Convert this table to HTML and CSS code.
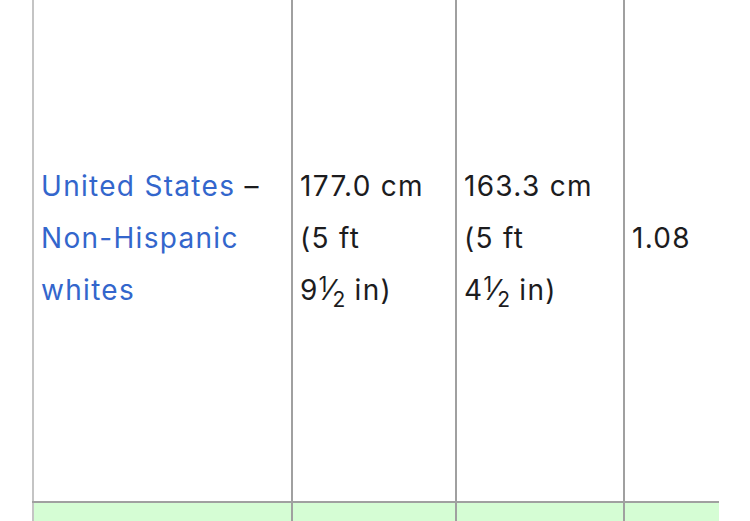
FILE: index.html
```html
<!DOCTYPE html>
<html>
<head>
<meta charset="utf-8">
<link rel="stylesheet" href="styles.css">
</head>
<body>
<div class="wrap">
<table class="heights">
<colgroup>
<col class="c-name">
<col class="c-male">
<col class="c-female">
<col class="c-ratio">
</colgroup>
<tbody>
<tr class="row-main">
<td class="cell cell-first"><a class="link" href="#">United States</a> – <a class="link" href="#">Non-Hispanic whites</a></td>
<td class="cell">177.0&nbsp;cm (5&nbsp;ft <span class="nw">9<span class="frac"><sup>1</sup>⁄<sub>2</sub></span>&nbsp;in)</span></td>
<td class="cell">163.3&nbsp;cm (5&nbsp;ft <span class="nw">4<span class="frac"><sup>1</sup>⁄<sub>2</sub></span>&nbsp;in)</span></td>
<td class="cell cell-last">1.08</td>
</tr>
<tr class="row-green">
<td class="cell cell-first"></td>
<td class="cell"></td>
<td class="cell"></td>
<td class="cell cell-last"></td>
</tr>
</tbody>
</table>
</div>
</body>
</html>
```
FILE: styles.css
```css
html, body {
  margin: 0;
  padding: 0;
  background: #ffffff;
}
body {
  font-family: "Inter", "Liberation Sans", sans-serif;
  font-size: 28px;
  letter-spacing: 1.3px;
  line-height: 52px;
  color: #1c1c1e;
  overflow: hidden;
  height: 521px;
}
.wrap {
  padding-left: 32px;
  margin-top: -26px;
}
.heights {
  border-collapse: collapse;
  table-layout: fixed;
  width: 686px;
}
.c-name { width: 259px; }
.c-male { width: 164px; }
.c-female { width: 168px; }
.c-ratio { width: 95px; }
.cell {
  border: 2px solid #a0a0a0;
  padding: 0 6px 0 7px;
  vertical-align: middle;
  text-align: left;
}
.cell-first { border-left-color: #c4c4c4; }
.cell-last { border-right: none; }
.row-main { height: 528px; }
.row-main .cell { border-top: none; }
.row-green { height: 40px; }
.row-green .cell { background: #d5fdd4; }
.row-green .cell-first { border-left-color: #c4c4c4; }
.link {
  color: #3366cc;
  text-decoration: none;
}
.nw { white-space: nowrap; }
.frac {
  white-space: nowrap;
  letter-spacing: 0;
}
.frac sup, .frac sub {
  font-size: 21px;
  line-height: 0;
}
.frac sup { vertical-align: 8px; }
.frac sub { vertical-align: -7px; }
```
